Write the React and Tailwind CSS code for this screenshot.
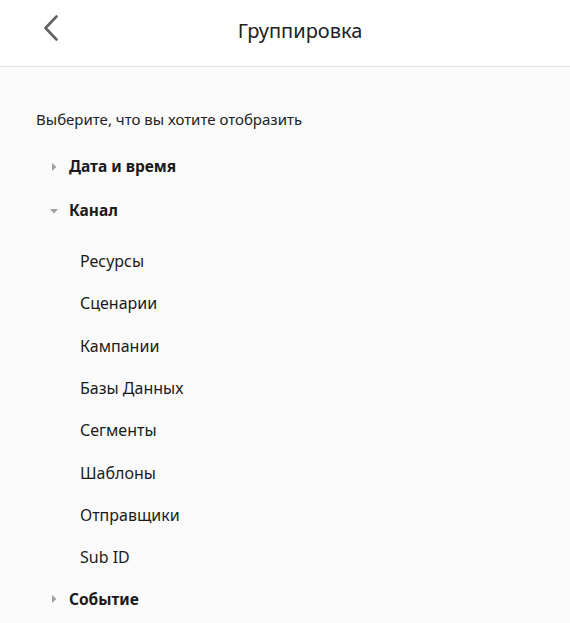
import React from "react";

function Tri({ open }) {
  return (
    <svg width="10" height="10" viewBox="0 0 10 10" className="shrink-0">
      {open ? (
        <polygon points="1,3 9,3 5,7.5" fill="#a0a0a0" />
      ) : (
        <polygon points="3,1 7.5,5 3,9" fill="#a0a0a0" />
      )}
    </svg>
  );
}

export default function App() {
  const children = ["Ресурсы", "Сценарии", "Кампании", "Базы Данных", "Сегменты", "Шаблоны", "Отправщики", "Sub ID"];
  return (
    <div className="w-[570px] h-[623px] overflow-hidden bg-[#fafafa] text-[#1a1a1a]" style={{ fontFamily: '"Noto Sans", "Open Sans", sans-serif' }}>
      <div className="h-[67px] bg-white border-b border-[#e3e3e3] flex items-center relative">
        <div className="absolute left-[40px] top-[14px]">
          <svg width="24" height="28" viewBox="0 0 24 28">
            <path d="M16.5 2.5 L5.5 14 L16.5 25.5" fill="none" stroke="#616161" strokeWidth="2.6" strokeLinecap="round" strokeLinejoin="round" />
          </svg>
        </div>
        <div className="flex-1 text-center text-[20px] text-[#222] leading-[26px] pb-[4px] pl-[30px]">Группировка</div>
      </div>
      <div className="pl-[36px] pt-[42px]">
        <div className="text-[15px] text-[#222] leading-[20px]">Выберите, что вы хотите отобразить</div>
        <div className="mt-[26px] flex items-center h-[24px] pl-[13px] gap-[10px]">
          <Tri />
          <span className="text-[15.5px] font-bold">Дата и время</span>
        </div>
        <div className="mt-[20px] flex items-center h-[24px] pl-[13px] gap-[10px]">
          <Tri open />
          <span className="text-[15.5px] font-bold">Канал</span>
        </div>
        <div className="pl-[44px] mt-[17px] flex flex-col">
          {children.map((c) => (
            <div key={c} className="h-[42.3px] flex items-center text-[16px]">{c}</div>
          ))}
        </div>
        <div className="mt-[9px] flex items-center h-[24px] pl-[13px] gap-[10px]">
          <Tri />
          <span className="text-[15.5px] font-bold">Событие</span>
        </div>
      </div>
    </div>
  );
}
